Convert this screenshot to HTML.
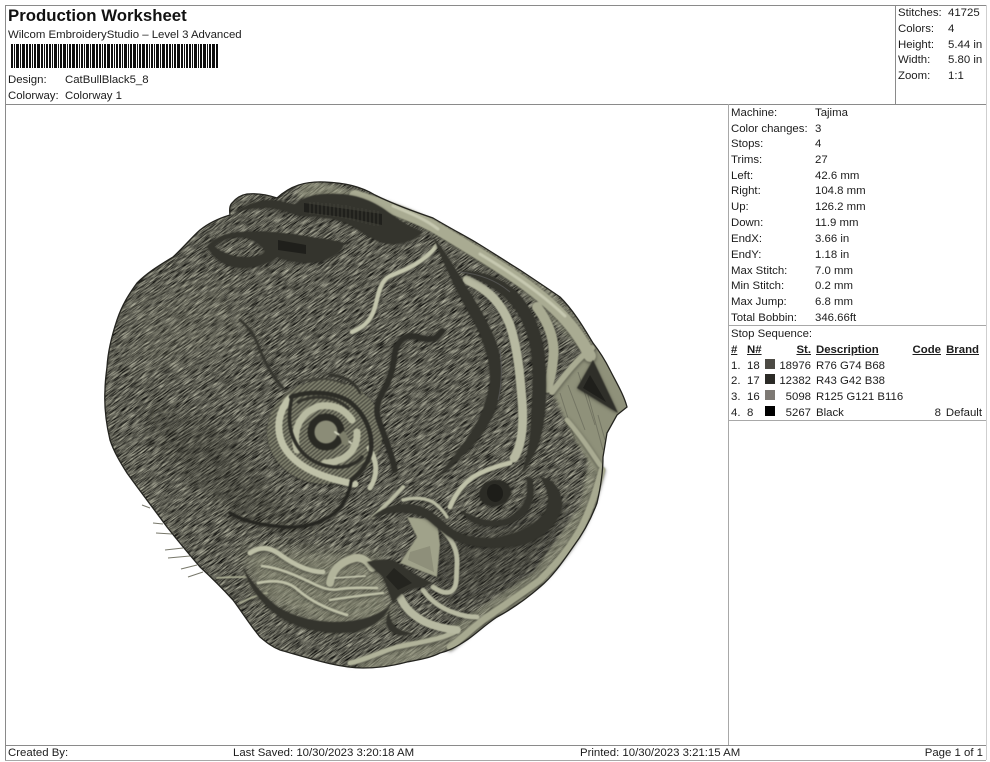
<!DOCTYPE html>
<html><head><meta charset="utf-8"><title>Production Worksheet</title>
<style>
html,body{margin:0;padding:0;background:#fff;overflow:hidden;width:990px;height:762px}
#p{position:relative;width:990px;height:762px;overflow:hidden;background:#fff;font:11.4px/14px "Liberation Sans",sans-serif;color:#1c1c1c}
.t{position:absolute;white-space:pre}
.l{position:absolute;background:#8a8a8a}
svg{position:absolute;left:0;top:0;display:block}
.u{font-weight:bold;text-decoration:underline}
.s{position:absolute;width:10px;height:10px}
</style></head><body><div id="p">
<svg width="990" height="762" viewBox="0 0 990 762">
<defs>
<filter id="tx" x="0" y="0" width="100%" height="100%" color-interpolation-filters="sRGB">
<feTurbulence type="fractalNoise" baseFrequency="0.09 0.8" numOctaves="3" seed="7" stitchTiles="stitch"/>
<feColorMatrix type="matrix" values="1.05 0 0 0 -0.16  1.05 0 0 0 -0.16  0.95 0 0 0 -0.15  0 0 0 0 1"/>
</filter>
<pattern id="noise" width="400" height="400" patternUnits="userSpaceOnUse" patternTransform="rotate(-36)">
<rect width="400" height="400" filter="url(#tx)"/>
</pattern>
<filter id="sh" x="-20%" y="-20%" width="140%" height="140%" color-interpolation-filters="sRGB">
<feGaussianBlur stdDeviation=".6"/>
<feDropShadow dx="0" dy="1" stdDeviation="1.6" flood-color="#1c1c18" flood-opacity=".55"/>
</filter>
<filter id="bl"><feGaussianBlur stdDeviation="7"/></filter>
<filter id="bs"><feGaussianBlur stdDeviation="1.6"/></filter>
<filter id="bb" filterUnits="userSpaceOnUse" x="5" y="38" width="220" height="36"><feGaussianBlur stdDeviation=".3"/></filter>
<pattern id="hat" width="3" height="3" patternUnits="userSpaceOnUse" patternTransform="rotate(-40)">
<rect width="3" height="3" fill="#8a8b76"/><rect width="3" height="1.3" fill="#3e3e36"/>
</pattern>
<clipPath id="body"><path id="o" d="M277 198C290 186 305 181 325 182C345 183 360 186 375 195C395 205 415 212 433 218C450 228 465 236 477 243C495 254 510 264 520 270C535 280 550 290 560 297C575 312 585 330 593 343C600 352 606 362 610 370C616 382 624 395 627 407L617 415L607 433L603 457C603 475 600 490 597 503C590 522 582 535 573 547C562 563 552 577 540 587C525 600 512 609 497 617C485 625 477 633 467 640C455 648 448 651 440 653C430 658 418 660 407 662C392 666 378 668 363 668C340 668 315 660 280 650C272 647 266 642 260 637C250 625 242 612 233 600C222 588 212 578 200 567C188 553 178 541 167 527C153 508 140 491 127 473C120 462 114 452 110 440C106 423 104 407 105 390C105 382 106 375 107 367C108 350 112 335 117 320C122 305 129 294 137 283C148 272 160 265 173 257C183 248 191 238 200 230C210 222 220 218 230 215C229 208 230 205 232 203C236 198 241 195 247 194C258 193 268 195 277 198Z"/></clipPath>
</defs>

<!-- stray stitches -->
<g stroke="#77776a" stroke-width="1" fill="none">
<path d="M142 505L150 508M153 523L163 524M156 533L172 534M165 550L183 548M168 558L190 556M181 569L197 565M188 577L203 572"/>
</g>

<g clip-path="url(#body)">
<rect x="90" y="170" width="550" height="510" fill="url(#noise)"/>
<!-- soft shading -->
<path d="M140 400L225 430L280 500L320 540L240 520L170 460Z" fill="#2d2d27" opacity=".28" filter="url(#bl)"/>
<path d="M120 300L230 270L260 350L130 380Z" fill="#8c8c7a" opacity=".14" filter="url(#bl)"/>
<path d="M420 540L570 500L540 580L450 610Z" fill="#2c2c27" opacity=".38" filter="url(#bl)"/>
<path d="M240 548L380 555L395 620L330 630L260 600Z" fill="#93947e" opacity=".6" filter="url(#bl)"/>
<path d="M300 188L420 215L520 275L590 345L620 405L600 450L590 510L540 580L450 640L360 668" fill="none" stroke="#a3a58c" stroke-width="20" opacity=".5" filter="url(#bs)"/>
<!-- ear region -->
<path d="M552 392L585 352L605 350L630 405L608 455L598 475L575 440Z" fill="#8f917a" filter="url(#bs)"/>
<g stroke="#5f6052" stroke-width="1" opacity=".55">
<path d="M560 393L575 440M568 385L585 430M578 372L595 425M588 395L603 450M598 415L605 440"/>
</g>
</g>

<g filter="url(#sh)" fill="none" stroke-linecap="round" stroke-linejoin="round">
<!-- outer light bands -->
<path d="M355 196C385 206 410 214 433 226C465 245 500 266 525 284C552 304 575 325 590 356" stroke="#a9ab92" stroke-width="12"/>
<path d="M393 206C410 213 425 219 438 229M480 254C510 272 540 292 565 316" stroke="#c6c8b0" stroke-width="3"/>
<path d="M552 392C565 375 578 358 592 348" stroke="#a9ab92" stroke-width="6"/>
<path d="M567 420C580 435 590 450 600 465" stroke="#a9ab92" stroke-width="5"/>
<path d="M602 470C595 495 590 510 580 530C565 555 552 568 540 580C520 595 500 608 483 620C470 630 460 640 450 647" stroke="#a7a990" stroke-width="7"/>
<path d="M350 663C365 660 380 652 397 647C420 642 440 640 457 631" stroke="#b1b39a" stroke-width="5"/>
<!-- central spike -->
<path d="M437 245C425 262 405 270 390 276C378 282 378 300 374 310C370 322 362 328 352 332" stroke="#c2c4ab" stroke-width="4.5"/>
<!-- inner light arcs -->
<path d="M467 280C490 290 502 305 510 325C518 350 520 375 522 400C524 425 522 445 514 458" stroke="#b7b9a1" stroke-width="9"/>
<path d="M537 307C548 322 556 340 553 360C552 372 550 380 547 388" stroke="#a9ab92" stroke-width="10"/>
<!-- eye disc -->
<ellipse cx="325" cy="432" rx="58" ry="52" fill="url(#hat)" stroke="none"/>
<path d="M290 398C279 410 275 428 283 445C292 462 310 472 330 478C340 481 348 483 355 484" stroke="#bfc1a8" stroke-width="7"/>
<path d="M369 448C378 462 378 475 370 488" stroke="#bfc1a8" stroke-width="5"/>
<path d="M297 450C292 430 300 412 320 406C335 404 345 410 352 420M357 432C358 450 345 462 325 463" stroke="#b8baa1" stroke-width="7"/>
<path d="M291 397C310 390 335 392 350 402C365 414 373 432 371 450C369 463 362 470 352 480" stroke="#2c2c26" stroke-width="4.5"/>
<path d="M292 397C289 410 288 425 293 437C300 455 315 465 333 467C345 468 355 465 362 457" stroke="#2e2e28" stroke-width="3.5"/>
<path d="M298 402C315 394 335 396 348 408" stroke="#34342d" stroke-width="3"/>
<path d="M330 375C345 376 355 382 360 393" stroke="#34342d" stroke-width="2.5"/>
<path d="M300 382C315 377 330 378 345 384" stroke="#44443b" stroke-width="1.6"/>
<circle cx="326" cy="432" r="15" stroke="#2a2a24" stroke-width="7" fill="#8b8c77"/>
<path d="M335 432L351 443" stroke="#cfd0ba" stroke-width="2"/>
<path d="M341 433A15 15 0 0 1 345 445" stroke="#7d7e6a" stroke-width="7" stroke-linecap="butt"/>
<!-- thin lines -->
<path d="M240 320C250 328 256 338 260 350C265 362 272 376 283 388" stroke="#36362f" stroke-width="2.4"/>
<path d="M442 331C436 341 428 340 418 337C406 333 398 340 395 352C393 365 393 372 385 388C378 400 375 408 378 418C382 430 388 445 392 458L395 470" stroke="#2e2e28" stroke-width="5.5"/>
<path d="M230 513C245 522 262 525 285 527C310 528 328 520 340 508C347 498 350 490 351 482" stroke="#262621" stroke-width="3.2"/>
<!-- whisker strands -->
<path d="M250 553C262 545 272 548 282 556C295 565 310 572 323 572" stroke="#bdbfa6" stroke-width="5"/>
<path d="M330 583C332 570 340 562 355 558C362 557 368 561 372 568" stroke="#b2b49b" stroke-width="8"/>
<path d="M262 566C280 568 295 575 312 583C322 588 330 591 340 589C355 587 365 588 377 588" stroke="#bfc1a8" stroke-width="2.8"/>
<path d="M258 583C272 580 287 580 298 590C312 602 330 610 347 615" stroke="#bfc1a8" stroke-width="3"/>
<path d="M330 600C348 597 366 595 383 593" stroke="#bfc1a8" stroke-width="2.6"/>
<path d="M335 578L365 576" stroke="#c6c8b0" stroke-width="1.8"/>
<path d="M217 578C228 577 238 577 247 577M240 603C250 598 258 595 267 593" stroke="#a9ab92" stroke-width="2"/>
<!-- muzzle -->
<path d="M373 517C383 508 393 498 403 487" stroke="#b7b9a1" stroke-width="4"/>
<path d="M403 500C415 497 425 498 433 502C440 507 444 512 447 517" stroke="#b7b9a1" stroke-width="3.5"/>
<path d="M450 507C455 495 462 485 473 477C485 470 497 466 510 463" stroke="#bfc1a8" stroke-width="5"/>
<path d="M443 530C452 540 458 550 457 565C456 578 458 588 450 592C443 594 438 590 433 587" stroke="#b7b9a1" stroke-width="5"/>
<path d="M400 597C405 608 412 615 425 622C436 627 446 629 457 630" stroke="#b7b9a1" stroke-width="8"/>
<path d="M423 590C430 600 440 608 455 613C463 616 470 617 477 617" stroke="#b7b9a1" stroke-width="5"/>
</g>
<path d="M407 517L437 520L440 545L437 577L400 563L417 537Z" fill="#a0a28a" filter="url(#sh)"/>
<path d="M410 552L430 546L434 572L408 560Z" fill="#8a8b75" opacity=".8"/>

<!-- dark filled shapes -->
<g fill="#34342d" filter="url(#sh)">
<path d="M234 213C245 205 258 200 272 200C285 201 288 204 295 204C305 196 318 193 335 194C355 194 372 200 388 212C402 222 412 228 423 232C415 239 402 245 390 244C378 243 368 236 352 226C338 218 318 216 302 216C292 214 285 210 272 208C258 207 245 209 234 213Z"/>
<path fill-rule="evenodd" d="M207 246C215 238 225 233 240 232C262 230 290 233 317 238C328 239 337 241 344 243C342 251 335 257 322 261C308 265 290 262 277 257C272 262 258 268 240 268C225 267 213 258 207 246ZM214 246C222 253 235 258 250 257C258 256 263 254 265 251C260 243 250 237 238 237C227 238 220 241 214 246Z"/>
<path d="M433 236C445 252 455 268 465 285C478 305 490 325 497 345C503 365 503 385 497 405C490 425 478 442 462 456C452 466 442 474 433 481C445 468 458 452 468 437C480 420 488 400 490 380C491 360 482 335 470 315C456 290 443 262 433 236Z"/>
<path d="M460 271C480 270 500 278 515 290C530 305 540 325 544 350C547 375 547 400 543 425C540 445 532 460 522 473C527 455 531 440 531 420C533 390 534 365 530 345C525 322 515 305 500 293C488 284 475 278 460 271Z"/>
<path d="M593 360L618 413L577 388Z" fill="#2f2f29"/>
<path d="M370 519C378 510 395 503 410 504C425 505 436 515 447 525C458 535 475 539 495 538C515 535 535 526 545 512C551 500 548 488 540 477C553 478 562 490 562 505C560 522 545 537 525 544C505 549 480 549 462 543C448 538 438 528 427 519C412 510 390 510 370 519Z"/>
<path d="M460 510C470 515 480 520 495 521C510 520 522 510 526 498C528 490 528 483 526 477L532 478C535 490 534 505 524 515C512 526 495 528 480 525C472 523 465 517 460 510Z"/>
<path d="M367 562C376 560 385 559 393 560C405 567 418 578 433 583C420 588 412 588 407 590C400 594 396 599 393 603C390 595 387 586 383 577C378 572 372 567 367 562Z"/>
<path d="M243 567C250 580 260 592 275 605C292 617 315 622 335 622C355 622 375 618 390 606C385 618 372 628 352 632C330 635 305 630 285 620C265 608 250 590 243 567Z"/>
<path d="M390 610C388 618 392 625 400 630C405 632 410 633 414 633C405 636 395 636 390 630C385 625 386 616 390 610Z"/>
</g>
<ellipse cx="495" cy="493" rx="16" ry="13" fill="#2c2c26" transform="rotate(-15 495 493)" filter="url(#sh)"/>
<ellipse cx="495" cy="493" rx="8" ry="9" fill="#1d1d19" transform="rotate(-15 495 493)"/>
<path d="M304 203L382 214L382 225L350 218L304 212Z" fill="#20201c"/>
<g stroke="#45453c" stroke-width=".8">
<path d="M310 202V214M314 202V214M318 202V215M322 203V215M326 203V216M330 203V216M334 204V217M338 204V217M342 205V218M346 205V219M350 206V220M354 207V221M358 208V222M362 208V223M366 209V224M370 210V225M374 210V226M378 211V226"/>
</g>
<path d="M278 240L306 245L306 254L278 250Z" fill="#1f1f1b"/>
<path d="M590 375L606 402L583 388Z" fill="#1f1f1b"/>
<path d="M386 577L394 568L412 583L398 590Z" fill="#24241f"/>
<path d="M460 272C480 274 497 281 510 292M500 350C502 365 502 385 498 400" fill="none" stroke="#5f6060" stroke-width="1" opacity=".7"/>

<use href="#o" fill="none" stroke="#24241f" stroke-width="1.3"/>

<!-- barcode -->
<line x1="11" y1="56" x2="219" y2="56" stroke="#0c0c0c" stroke-width="24" filter="url(#bb)" stroke-dasharray="2 1 1 1 3 1 1 1 3 1 2 1 2 1 1 1 2 1 3 1 2 1 1 1 2 1 2 1 1 1 3 1 1 1 2 1 3 1 1 1 2 1 3 1 2 1 1 1"/>
</svg>

<!-- frame lines -->
<div class="l" style="left:5px;top:5px;width:981px;height:1px"></div>
<div class="l" style="left:5px;top:5px;width:1px;height:755px"></div>
<div class="l" style="left:986px;top:5px;width:1px;height:755px;background:#cfcfcf"></div>
<div class="l" style="left:5px;top:104px;width:981px;height:1px"></div>
<div class="l" style="left:895px;top:5px;width:1px;height:99px"></div>
<div class="l" style="left:728px;top:104px;width:1px;height:641px;background:#a8a8a8"></div>
<div class="l" style="left:728px;top:325px;width:258px;height:1px;background:#a8a8a8"></div>
<div class="l" style="left:728px;top:420px;width:258px;height:1px;background:#a8a8a8"></div>
<div class="l" style="left:5px;top:745px;width:981px;height:1px"></div>
<div class="l" style="left:5px;top:760px;width:981px;height:1px;background:#a8a8a8"></div>

<!-- header -->
<div class="t" style="left:8px;top:6px;font-size:16.8px;line-height:20px;font-weight:bold;color:#111">Production Worksheet</div>
<div class="t" style="left:8px;top:28px">Wilcom EmbroideryStudio – Level 3 Advanced</div>
<div class="t" style="left:8px;top:73px">Design:</div><div class="t" style="left:65px;top:73px">CatBullBlack5_8</div>
<div class="t" style="left:8px;top:89px">Colorway:</div><div class="t" style="left:65px;top:89px">Colorway 1</div>

<div class="t" style="left:898px;top:6px">Stitches:</div><div class="t" style="left:948px;top:6px">41725</div>
<div class="t" style="left:898px;top:22px">Colors:</div><div class="t" style="left:948px;top:22px">4</div>
<div class="t" style="left:898px;top:38px">Height:</div><div class="t" style="left:948px;top:38px">5.44 in</div>
<div class="t" style="left:898px;top:53px">Width:</div><div class="t" style="left:948px;top:53px">5.80 in</div>
<div class="t" style="left:898px;top:69px">Zoom:</div><div class="t" style="left:948px;top:69px">1:1</div>

<!-- machine table -->
<div class="t" style="left:731px;top:106px">Machine:</div><div class="t" style="left:815px;top:106px">Tajima</div>
<div class="t" style="left:731px;top:122px">Color changes:</div><div class="t" style="left:815px;top:122px">3</div>
<div class="t" style="left:731px;top:137px">Stops:</div><div class="t" style="left:815px;top:137px">4</div>
<div class="t" style="left:731px;top:153px">Trims:</div><div class="t" style="left:815px;top:153px">27</div>
<div class="t" style="left:731px;top:169px">Left:</div><div class="t" style="left:815px;top:169px">42.6 mm</div>
<div class="t" style="left:731px;top:184px">Right:</div><div class="t" style="left:815px;top:184px">104.8 mm</div>
<div class="t" style="left:731px;top:200px">Up:</div><div class="t" style="left:815px;top:200px">126.2 mm</div>
<div class="t" style="left:731px;top:216px">Down:</div><div class="t" style="left:815px;top:216px">11.9 mm</div>
<div class="t" style="left:731px;top:232px">EndX:</div><div class="t" style="left:815px;top:232px">3.66 in</div>
<div class="t" style="left:731px;top:248px">EndY:</div><div class="t" style="left:815px;top:248px">1.18 in</div>
<div class="t" style="left:731px;top:264px">Max Stitch:</div><div class="t" style="left:815px;top:264px">7.0 mm</div>
<div class="t" style="left:731px;top:279px">Min Stitch:</div><div class="t" style="left:815px;top:279px">0.2 mm</div>
<div class="t" style="left:731px;top:295px">Max Jump:</div><div class="t" style="left:815px;top:295px">6.8 mm</div>
<div class="t" style="left:731px;top:311px">Total Bobbin:</div><div class="t" style="left:815px;top:311px">346.66ft</div>

<!-- stop sequence -->
<div class="t" style="left:731px;top:327px">Stop Sequence:</div>
<div class="t u" style="left:731px;top:343px">#</div>
<div class="t u" style="left:747px;top:343px">N#</div>
<div class="t u" style="right:179px;top:343px">St.</div>
<div class="t u" style="left:816px;top:343px">Description</div>
<div class="t u" style="right:49px;top:343px">Code</div>
<div class="t u" style="right:11px;top:343px">Brand</div>

<div class="t" style="left:731px;top:359px">1.</div><div class="t" style="left:747px;top:359px">18</div><div class="s" style="left:765px;top:359px;background:#4c4a44"></div><div class="t" style="right:179px;top:359px">18976</div><div class="t" style="left:816px;top:359px">R76 G74 B68</div>
<div class="t" style="left:731px;top:374px">2.</div><div class="t" style="left:747px;top:374px">17</div><div class="s" style="left:765px;top:374px;background:#2b2a26"></div><div class="t" style="right:179px;top:374px">12382</div><div class="t" style="left:816px;top:374px">R43 G42 B38</div>
<div class="t" style="left:731px;top:390px">3.</div><div class="t" style="left:747px;top:390px">16</div><div class="s" style="left:765px;top:390px;background:#7d7974"></div><div class="t" style="right:179px;top:390px">5098</div><div class="t" style="left:816px;top:390px">R125 G121 B116</div>
<div class="t" style="left:731px;top:406px">4.</div><div class="t" style="left:747px;top:406px">8</div><div class="s" style="left:765px;top:406px;background:#000"></div><div class="t" style="right:179px;top:406px">5267</div><div class="t" style="left:816px;top:406px">Black</div><div class="t" style="right:49px;top:406px">8</div><div class="t" style="right:8px;top:406px">Default</div>

<!-- footer -->
<div class="t" style="left:8px;top:746px">Created By:</div>
<div class="t" style="left:233px;top:746px">Last Saved: 10/30/2023 3:20:18 AM</div>
<div class="t" style="left:580px;top:746px">Printed: 10/30/2023 3:21:15 AM</div>
<div class="t" style="right:7px;top:746px">Page 1 of 1</div>
</div></body></html>
